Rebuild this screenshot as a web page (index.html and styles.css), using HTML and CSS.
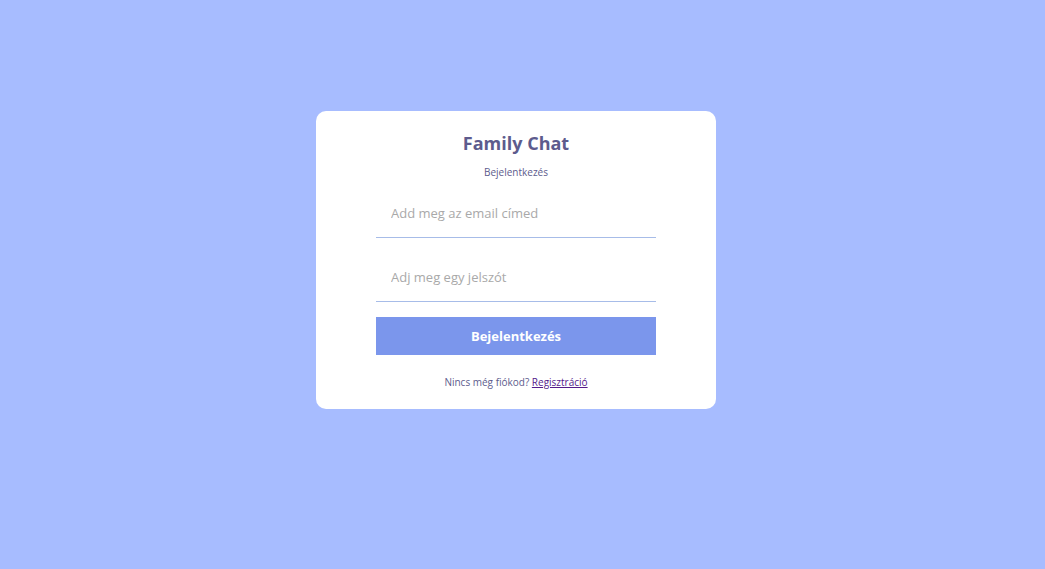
FILE: index.html
```
<!DOCTYPE html>
<html lang="hu">
<head>
<meta charset="utf-8">
<meta name="viewport" content="width=device-width, initial-scale=1">
<title>Family Chat</title>
<link rel="stylesheet" href="styles.css">
</head>
<body>
<main class="form-container">
  <section class="form-wrapper">
    <h1 class="logo">Family Chat</h1>
    <p class="title">Bejelentkezés</p>
    <form class="form">
      <input class="field" type="email" aria-label="Email cím" placeholder="Add meg az email címed">
      <input class="field" type="password" aria-label="Jelszó" placeholder="Adj meg egy jelszót">
      <button class="submit" type="submit">Bejelentkezés</button>
    </form>
    <p class="note">Nincs még fiókod? <a class="link" href="#register">Regisztráció</a></p>
  </section>
</main>
</body>
</html>
```
FILE: styles.css
```
* {
  box-sizing: border-box;
}

body {
  margin: 0;
  font-family: "Open Sans", sans-serif;
}

.form-container {
  display: flex;
  align-items: center;
  justify-content: center;
  min-height: 100vh;
  padding: 0 13px 49px 0;
  background: #a7bcff;
}

.form-wrapper {
  display: flex;
  flex-direction: column;
  align-items: center;
  gap: 10px;
  width: 400px;
  max-width: 100%;
  padding: 20px 60px;
  border-radius: 10px;
  background: #fff;
  color: #5d5b8d;
}

.logo,
.title,
.note {
  margin: 0;
}

.logo {
  font-size: 18px;
  line-height: 24px;
  font-weight: 700;
}

.title,
.note {
  font-size: 10px;
  line-height: 14px;
}

.note {
  margin-top: 10px;
}

.form {
  display: flex;
  flex-direction: column;
  gap: 15px;
  width: 100%;
}

.field {
  width: 100%;
  height: 49px;
  padding: 15px;
  border: 0;
  border-bottom: 1px solid #a7bce8;
  background: transparent;
  color: #333;
  font: 13px/18px "Open Sans", sans-serif;
}

.field::placeholder {
  color: #a9a9a9;
}

.submit {
  height: 38px;
  padding: 10px;
  border: 0;
  background: #7b96ec;
  color: #fff;
  font: 700 13px/18px "Open Sans", sans-serif;
  cursor: pointer;
}

.link {
  color: #551a8b;
}
```
